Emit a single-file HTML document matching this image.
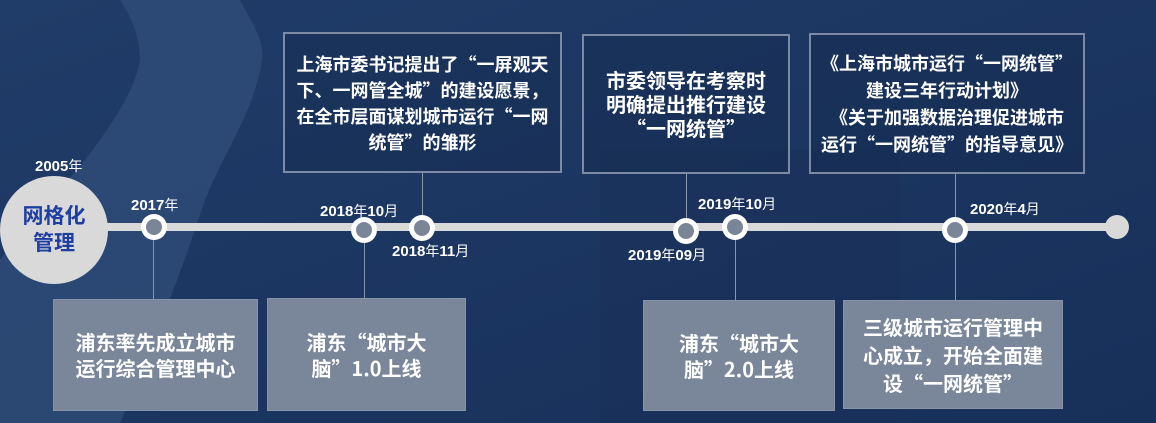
<!DOCTYPE html>
<html><head><meta charset="utf-8"><style>
*{margin:0;padding:0;box-sizing:border-box}
body{width:1156px;height:423px;overflow:hidden;background:#1b3560;position:relative;font-family:"Noto Sans CJK SC","Liberation Sans",sans-serif;color:#fff}
.abs{position:absolute}
.bg{left:0;top:0}
.line{left:105px;top:223px;width:1012px;height:8px;background:#d9d9d9}
.end{left:1105px;top:215px;width:24px;height:24px;border-radius:50%;background:#d9d9d9}
.big{left:0;top:176px;width:108px;height:108px;border-radius:50%;background:#d9d9d9;color:#1f3fa0;font-weight:bold;font-size:21px;line-height:27px;text-align:center;padding-top:26px}
.node{width:26px;height:26px;border-radius:50%;background:#fff;}
.node::after{content:"";position:absolute;left:5px;top:5px;width:16px;height:16px;border-radius:50%;background:#7a8598}
.vl{width:1px;background:#8a96aa}
.lbl{font-family:"Liberation Sans Narrow","Liberation Sans","Noto Sans CJK SC",sans-serif;font-weight:bold;font-size:15px;white-space:nowrap}
.lbl span{font-family:"Noto Sans CJK SC",sans-serif;font-weight:normal;font-size:14px}
.bb{background:#7a8699;display:flex;align-items:center;justify-content:center;text-align:center;font-weight:bold;font-size:20px;line-height:26px;border:1px solid #8893a5}
.tb{border:2px solid #7c8aa3;display:flex;align-items:center;justify-content:center;text-align:center;font-weight:bold;background:rgba(20,40,75,.35)}
</style></head><body>
<svg class="abs bg" width="1156" height="423" viewBox="0 0 1156 423">
<defs><linearGradient id="g" x1="0" y1="0" x2="1" y2="1"><stop offset="0" stop-color="#203c68"/><stop offset="1" stop-color="#17305a"/></linearGradient></defs>
<rect width="1156" height="423" fill="url(#g)"/>
<path d="M120 0 L240 0 C250 20 265 40 262 60 C255 110 225 150 205 200 C185 260 160 330 120 423 L0 423 L0 260 C30 220 60 190 85 160 C115 120 135 90 140 60 C140 35 130 15 120 0 Z" fill="#2d4a76" opacity=".9"/>
<rect x="600" y="150" width="300" height="273" fill="#1a3058" opacity=".5"/>
</svg>
<div class="abs line"></div>
<div class="abs end"></div>
<div class="abs big">网格化<br>管理</div>
<div class="abs lbl" style="left:35px;top:156px">2005<span>年</span></div>

<div class="abs vl" style="left:153px;top:236px;height:63px"></div>
<div class="abs vl" style="left:364px;top:236px;height:63px"></div>
<div class="abs vl" style="left:422px;top:173px;height:45px"></div>
<div class="abs vl" style="left:686px;top:173px;height:45px"></div>
<div class="abs vl" style="left:735px;top:236px;height:64px"></div>
<div class="abs vl" style="left:955px;top:174px;height:126px"></div>

<div class="abs node" style="left:141px;top:214px"></div>
<div class="abs node" style="left:351px;top:217px"></div>
<div class="abs node" style="left:409px;top:215px"></div>
<div class="abs node" style="left:673px;top:218px"></div>
<div class="abs node" style="left:722px;top:214px"></div>
<div class="abs node" style="left:942px;top:217px"></div>

<div class="abs lbl" style="left:131px;top:195px">2017<span>年</span></div>
<div class="abs lbl" style="left:320px;top:201px">2018<span>年</span>10<span>月</span></div>
<div class="abs lbl" style="left:392px;top:241px">2018<span>年</span>11<span>月</span></div>
<div class="abs lbl" style="left:628px;top:245px">2019<span>年</span>09<span>月</span></div>
<div class="abs lbl" style="left:698px;top:194px">2019<span>年</span>10<span>月</span></div>
<div class="abs lbl" style="left:970px;top:199px">2020<span>年</span>4<span>月</span></div>

<div class="abs tb" style="left:283px;top:32px;width:279px;height:141px;font-size:18px;line-height:26px">上海市委书记提出了“一屏观天<br>下、一网管全城”的建设愿景，<br>在全市层面谋划城市运行“一网<br>统管”的雏形</div>
<div class="abs tb" style="left:582px;top:34px;width:208px;height:140px;font-size:20px;line-height:24px">市委领导在考察时<br>明确提出推行建设<br>“一网统管”</div>
<div class="abs tb" style="left:809px;top:33px;width:276px;height:141px;font-size:18px;line-height:27px">《上海市城市运行“一网统管”<br>建设三年行动计划》<br>《关于加强数据治理促进城市<br>运行“一网统管”的指导意见》</div>

<div class="abs bb" style="left:53px;top:299px;width:205px;height:112px">浦东率先成立城市<br>运行综合管理中心</div>
<div class="abs bb" style="left:267px;top:298px;width:199px;height:113px">浦东“城市大<br>脑”1.0上线</div>
<div class="abs bb" style="left:643px;top:300px;width:192px;height:111px">浦东“城市大<br>脑”2.0上线</div>
<div class="abs bb" style="left:843px;top:300px;width:220px;height:109px;line-height:28px">三级城市运行管理中<br>心成立，开始全面建<br>设“一网统管”</div>
</body></html>
